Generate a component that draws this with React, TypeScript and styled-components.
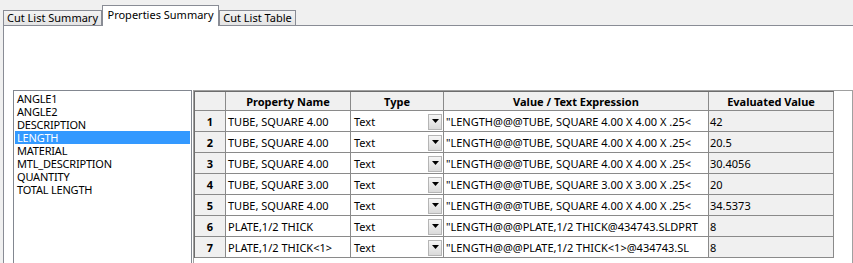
import React from 'react'
import styled, { createGlobalStyle } from 'styled-components'

const GlobalStyle = createGlobalStyle`
  html, body {
    margin: 0;
    padding: 0;
    background: #f0f0f0;
    font-family: "Noto Sans", "Open Sans", sans-serif;
    font-size: 11px;
    color: #000;
  }
`

const Window = styled.div`
  width: 853px;
  height: 263px;
  overflow: hidden;
  display: flex;
  flex-direction: column;
`

const TabStrip = styled.div`
  display: flex;
  flex-shrink: 0;
  align-items: flex-end;
  height: 25px;
  padding-left: 3px;
  position: relative;
  z-index: 1;
`

const Tab = styled.div<{ $active?: boolean; $w: number }>`
  box-sizing: border-box;
  width: ${p => p.$w}px;
  height: ${p => (p.$active ? 21 : 15)}px;
  margin-bottom: ${p => (p.$active ? -1 : 0)}px;
  border: 1px solid #898c95;
  border-bottom: none;
  background: ${p => (p.$active ? '#fff' : 'linear-gradient(#f3f3f3, #e4e4e4)')};
  display: flex;
  align-items: ${p => (p.$active ? 'flex-start' : 'center')};
  justify-content: center;
  padding-top: ${p => (p.$active ? 2 : 0)}px;
  line-height: 14px;
  white-space: nowrap;
`

const Panel = styled.div`
  flex: 1 0 auto;
  margin-left: 3px;
  border-left: 1px solid #898c95;
  border-top: 1px solid #898c95;
  background: #fff;
  padding: 64px 0 0 9px;
  display: flex;
  align-items: flex-start;
`

const ListBox = styled.ul`
  box-sizing: border-box;
  width: 179px;
  height: 200px;
  margin: 0;
  padding: 1px;
  list-style: none;
  border: 1px solid #828790;
  background: #fff;
`

const ListItem = styled.li<{ $selected?: boolean }>`
  height: 13px;
  line-height: 13px;
  padding-left: 2px;
  white-space: nowrap;
  letter-spacing: -0.2px;
  background: ${p => (p.$selected ? '#3399ff' : 'transparent')};
  color: ${p => (p.$selected ? '#fff' : '#000')};
`

const GridBox = styled.div`
  flex: 1;
  height: 200px;
  margin-left: 1px;
  border: 1px solid #a0a0a0;
  background: #fff;
`

const Table = styled.table`
  border-collapse: separate;
  border-spacing: 0;
  table-layout: fixed;
  border-top: 1px solid #6d6d6d;
  border-left: 1px solid #6d6d6d;
`

const HeadCell = styled.th<{ $w: number }>`
  box-sizing: border-box;
  width: ${p => p.$w}px;
  height: 19px;
  padding: 0;
  background: #f0f0f0;
  border-right: 1px solid #8a8a8a;
  border-bottom: 1px solid #8a8a8a;
  font-weight: bold;
  text-align: center;
  white-space: nowrap;
`

const RowHead = styled.td`
  height: 20px;
  padding: 0;
  background: #f0f0f0;
  border-right: 1px solid #8a8a8a;
  border-bottom: 1px solid #8a8a8a;
  font-weight: bold;
  text-align: center;
`

const Cell = styled.td<{ $readOnly?: boolean }>`
  box-sizing: border-box;
  height: 20px;
  padding: 0 0 0 ${p => (p.$readOnly ? 1 : 2)}px;
  background: ${p => (p.$readOnly ? '#f0f0f0' : '#fff')};
  border-right: 1px solid #8a8a8a;
  border-bottom: 1px solid #8a8a8a;
  white-space: nowrap;
  overflow: hidden;
`

const Combo = styled.div`
  display: flex;
  align-items: flex-end;
  justify-content: space-between;
  height: 19px;
  padding-left: 1px;
  line-height: 19px;
`

const DropButton = styled.span`
  box-sizing: border-box;
  width: 14px;
  height: 16px;
  margin: 0 1px 1px 0;
  border: 1px solid #b5b5b5;
  background: linear-gradient(#f6f6f6, #dadada);
  display: flex;
  align-items: center;
  justify-content: center;
`

const rows = [
  ['TUBE, SQUARE 4.00', '"LENGTH@@@TUBE, SQUARE 4.00 X 4.00 X .25<', '42'],
  ['TUBE, SQUARE 4.00', '"LENGTH@@@TUBE, SQUARE 4.00 X 4.00 X .25<', '20.5'],
  ['TUBE, SQUARE 4.00', '"LENGTH@@@TUBE, SQUARE 4.00 X 4.00 X .25<', '30.4056'],
  ['TUBE, SQUARE 3.00', '"LENGTH@@@TUBE, SQUARE 3.00 X 3.00 X .25<', '20'],
  ['TUBE, SQUARE 4.00', '"LENGTH@@@TUBE, SQUARE 4.00 X 4.00 X .25<', '34.5373'],
  ['PLATE,1/2 THICK', '"LENGTH@@@PLATE,1/2 THICK@434743.SLDPRT', '8'],
  ['PLATE,1/2 THICK<1>', '"LENGTH@@@PLATE,1/2 THICK<1>@434743.SL', '8'],
]

const properties = ['ANGLE1', 'ANGLE2', 'DESCRIPTION', 'LENGTH', 'MATERIAL', 'MTL_DESCRIPTION', 'QUANTITY', 'TOTAL LENGTH']

const Arrow = () => (
  <svg width="7" height="5" viewBox="0 0 7 5">
    <path d="M0 0h7L3.5 4z" fill="#000" />
  </svg>
)

const App: React.FC = () => (
  <Window>
    <GlobalStyle />
    <TabStrip>
      <Tab $w={99}>Cut List Summary</Tab>
      <Tab $w={117} $active>Properties Summary</Tab>
      <Tab $w={77}>Cut List Table</Tab>
    </TabStrip>
    <Panel>
      <ListBox>
        {properties.map(p => (
          <ListItem key={p} $selected={p === 'LENGTH'}>{p}</ListItem>
        ))}
      </ListBox>
      <GridBox>
        <Table>
          <thead>
            <tr>
              <HeadCell $w={31} />
              <HeadCell $w={125}>Property Name</HeadCell>
              <HeadCell $w={93}>Type</HeadCell>
              <HeadCell $w={265}>Value / Text Expression</HeadCell>
              <HeadCell $w={125}>Evaluated Value</HeadCell>
            </tr>
          </thead>
          <tbody>
            {rows.map((r, i) => (
              <tr key={i}>
                <RowHead>{i + 1}</RowHead>
                <Cell>{r[0]}</Cell>
                <Cell>
                  <Combo>
                    <span>Text</span>
                    <DropButton><Arrow /></DropButton>
                  </Combo>
                </Cell>
                <Cell>{r[1]}</Cell>
                <Cell $readOnly>{r[2]}</Cell>
              </tr>
            ))}
          </tbody>
        </Table>
      </GridBox>
    </Panel>
  </Window>
)

export default App
